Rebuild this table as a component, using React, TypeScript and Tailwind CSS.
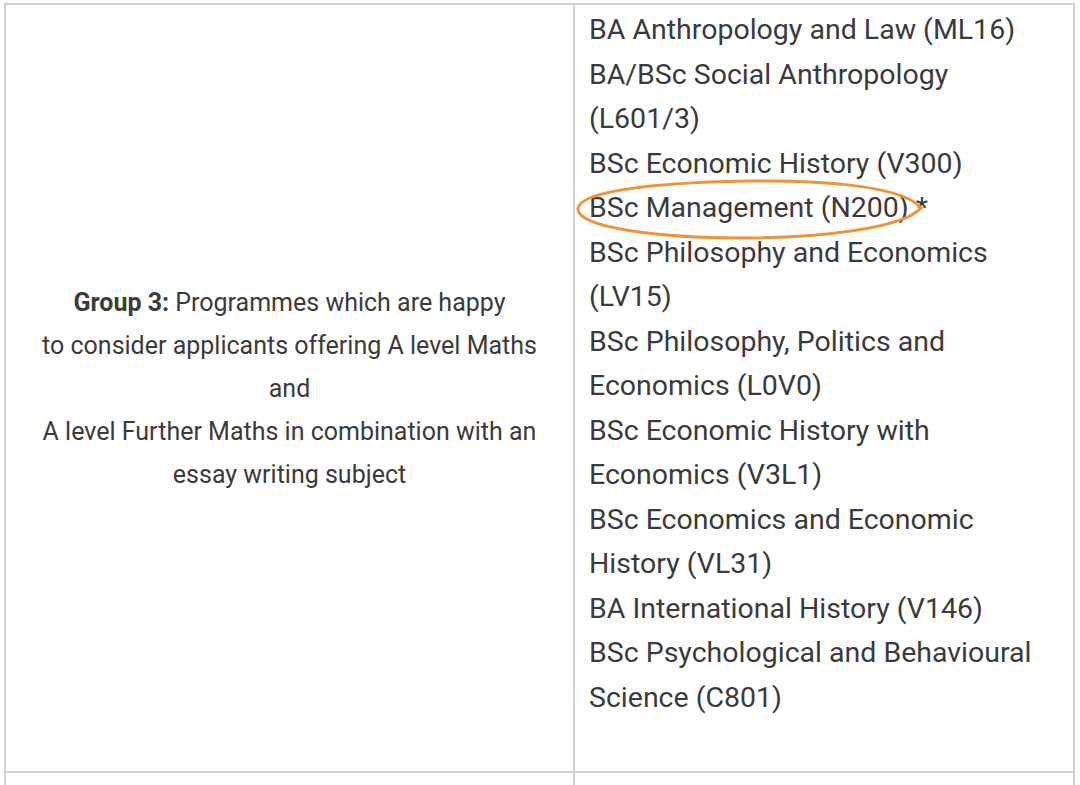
const programmes = [
  "BA Anthropology and Law (ML16)",
  "BA/BSc Social Anthropology",
  "(L601/3)",
  "BSc Economic History (V300)",
  "BSc Management (N200) *",
  "BSc Philosophy and Economics",
  "(LV15)",
  "BSc Philosophy, Politics and",
  "Economics (L0V0)",
  "BSc Economic History with",
  "Economics (V3L1)",
  "BSc Economics and Economic",
  "History (VL31)",
  "BA International History (V146)",
  "BSc Psychological and Behavioural",
  "Science (C801)",
];

export default function App() {
  return (
    <div
      className="w-[1080px] h-[785px] overflow-hidden bg-white pl-[4px] pt-[3px] text-[#3b3b3b]"
      style={{ fontFamily: "Roboto, 'Noto Sans', sans-serif" }}
    >
      <div className="w-[1071px] border-l-2 border-t-2 border-[#d2d2d2] grid grid-cols-[569px_500px]">
        {/* Group 3 */}
        <div className="h-[768px] border-r-2 border-b-2 border-[#d2d2d2] flex items-center justify-center">
          <p className="text-center text-[25px] leading-[43px]">
            <span className="block whitespace-nowrap">
              <strong className="font-bold">Group 3:</strong> Programmes which are happy
            </span>
            <span className="block whitespace-nowrap">to consider applicants offering A level Maths</span>
            <span className="block whitespace-nowrap">and</span>
            <span className="block whitespace-nowrap">A level Further Maths in combination with an</span>
            <span className="block whitespace-nowrap">essay writing subject</span>
          </p>
        </div>

        <div className="relative h-[768px] border-r-2 border-b-2 border-[#d2d2d2] pl-[14px] pt-[3px]">
          <ul className="text-[28.5px] leading-[44.5px]">
            {programmes.map((p) => (
              <li key={p} className="whitespace-nowrap">
                {p}
              </li>
            ))}
          </ul>

          {/* hand-drawn highlight */}
          <svg
            className="absolute left-[-3px] top-[165px] pointer-events-none"
            width="363"
            height="76"
            viewBox="0 0 363 76"
          >
            <path
              d="M349 38 C 331 16, 250 10, 180 11 C 100 12, 10 19, 6 38 C 3 58, 90 68, 170 68 C 250 68, 331 58, 349 38 Z"
              fill="none"
              stroke="#ec953a"
              strokeWidth="3"
            />
          </svg>
        </div>

        {/* next row */}
        <div className="h-[20px] border-r-2 border-[#d2d2d2]" />
        <div className="h-[20px] border-r-2 border-[#d2d2d2]" />
      </div>
    </div>
  );
}
